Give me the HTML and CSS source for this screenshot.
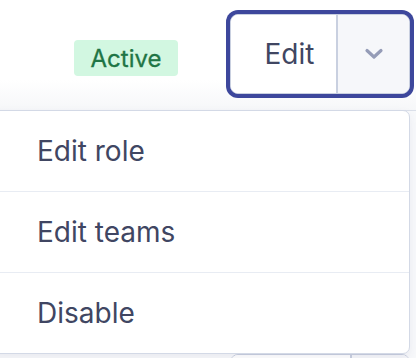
FILE: index.html
```html
<!DOCTYPE html>
<html lang="en">
<head>
  <meta charset="UTF-8">
  <title>Members</title>
  <link rel="stylesheet" href="styles.css">
</head>
<body>
  <div class="table">
    <div class="member-row">
      <span class="badge">Active</span>
      <div class="split-btn is-focused">
        <button class="split-main">Edit</button>
        <button class="split-toggle" title="More actions">
          <svg width="20" height="12" viewBox="0 0 20 12">
            <path d="M3 2.5 L10 9 L17 2.5" fill="none" stroke="currentColor" stroke-width="3.2" stroke-linecap="round" stroke-linejoin="round"/>
          </svg>
        </button>
      </div>
    </div>
    <!-- next member row, mostly hidden under the menu -->
    <div class="member-row next-row">
      <div class="split-btn">
        <span class="split-main"></span>
        <span class="split-toggle"></span>
      </div>
    </div>

    <!-- dropdown for the first row -->
    <ul class="menu">
      <li class="menu-item">Edit role</li>
      <li class="menu-item">Edit teams</li>
      <li class="menu-item">Disable</li>
    </ul>
  </div>
</body>
</html>
```

FILE: styles.css
```css
:root {
  --text: #404662;
  --muted: #959cb7;
  --border: #c9d0e0;
  --line: #e8ecf3;
  --ring: #3d479c;
  --soft: #f6f7fa;
}
html, body {
  margin: 0;
  padding: 0;
  background: #fff;
  font-family: 'Inter', 'Noto Sans', sans-serif;
  color: var(--text);
  overflow: hidden;
}
.table {
  position: relative;
  width: 416px;
  height: 358px;
  overflow: hidden;
}
.member-row {
  height: 110px;
  box-sizing: border-box;
  display: flex;
  align-items: flex-start;
  justify-content: flex-end;
  gap: 52px;
  padding: 14px 6px 0 0;
  background: linear-gradient(#fff 0, #fff 80px, #f6f7f9 110px);
}
.next-row {
  height: 248px;
  padding-top: 243px;
  background: #f8f9fb;
  border-top: 1px solid #dbe0ea;
}
.badge {
  margin-top: 26px;
  width: 104px;
  height: 36px;
  display: flex;
  align-items: center;
  justify-content: center;
  background: #d2f7e1;
  color: #1f7545;
  font-size: 24px;
  font-weight: 400;
  -webkit-text-stroke: 0.3px #1f7545;
  border-radius: 4px;
}
.split-btn {
  display: flex;
  width: 180px;
  height: 80px;
  box-sizing: border-box;
  border: 1px solid var(--border);
  border-radius: 8px;
  overflow: hidden;
  background: #fff;
}
.split-btn.is-focused {
  box-shadow: 0 0 0 4px var(--ring);
}
.split-btn button {
  border: none;
  margin: 0;
  padding: 0;
  font-family: inherit;
  cursor: pointer;
}
.split-main {
  width: 107px;
  background: #fff;
  color: var(--text);
  font-size: 28px;
  padding-left: 12px !important;
  border-right: 2px solid var(--border) !important;
}
.split-toggle {
  flex: 1;
  background: var(--soft);
  color: var(--muted);
  display: flex;
  align-items: center;
  justify-content: center;
}
.menu {
  position: absolute;
  top: 110px;
  left: -10px;
  width: 420px;
  margin: 0;
  padding: 0;
  list-style: none;
  background: #fff;
  border: 1px solid #d3d9e6;
  border-radius: 7px;
  box-sizing: border-box;
  box-shadow: 0 4px 10px rgba(60, 70, 110, 0.08);
}
.menu-item {
  height: 80px;
  display: flex;
  align-items: center;
  padding-left: 46px;
  font-size: 28px;
  border-top: 1px solid var(--line);
}
.menu-item:first-child {
  border-top: none;
}
```
